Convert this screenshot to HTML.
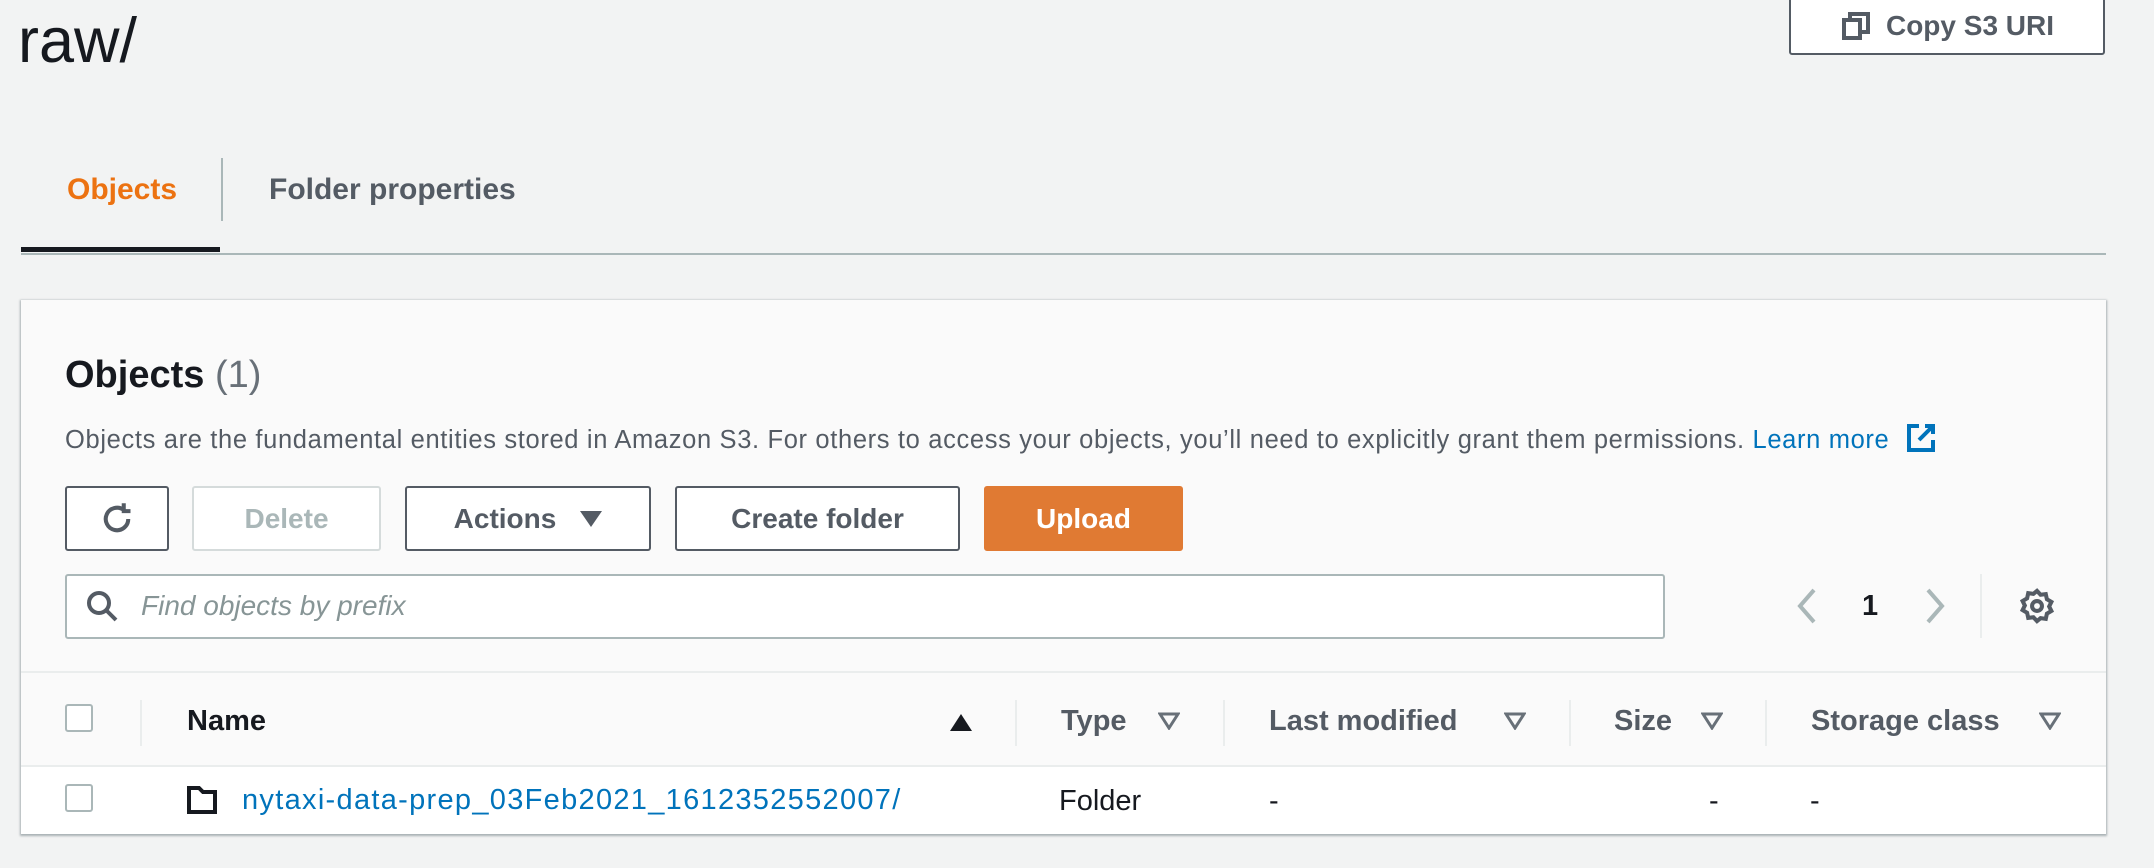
<!DOCTYPE html>
<html><head><meta charset="utf-8"><style>
*{box-sizing:border-box;margin:0;padding:0}
body{width:2154px;height:868px;background:#f2f3f3;font-family:"Liberation Sans",sans-serif;color:#16191f;position:relative;overflow:hidden}
.a{position:absolute}
.btn{position:absolute;top:486px;height:65px;border:2px solid #545b64;border-radius:3px;background:#fff;font-weight:bold;font-size:28px;color:#545b64;display:flex;align-items:center;justify-content:center}
.th{position:absolute;top:705px;font-weight:bold;font-size:29px;color:#545b64}
.dv{position:absolute;top:700px;width:2px;height:46px;background:#eaeded}
.fi{position:absolute;top:712px}
.cb{position:absolute;left:65px;width:28px;height:28px;border:2px solid #aab7b8;border-radius:3px;background:#fff}
</style></head><body>
<div class="a" style="left:18px;top:5px;font-size:63px;color:#16191f">raw/</div>
<div class="a" style="left:1789px;top:-4px;width:316px;height:59px;border:2px solid #545b64;border-radius:3px;background:#fff;display:flex;align-items:center;justify-content:center;font-weight:bold;font-size:28px;color:#545b64">
<svg width="32" height="32" viewBox="0 0 16 16" style="margin-right:14px" fill="none" stroke="#545b64" stroke-width="2"><rect x="2" y="5" width="8" height="9"/><path d="M5 5V2h9v9h-4"/></svg>Copy S3 URI</div>
<div class="a" style="left:67px;top:173px;font-size:30px;font-weight:bold;color:#ec7211">Objects</div>
<div class="a" style="left:221px;top:158px;width:2px;height:63px;background:#aab7b8"></div>
<div class="a" style="left:269px;top:173px;font-size:30px;font-weight:bold;color:#545b64">Folder properties</div>
<div class="a" style="left:21px;top:253px;width:2085px;height:2px;background:#aab7b8"></div>
<div class="a" style="left:21px;top:247px;width:199px;height:5px;background:#16191f"></div>

<div class="a" style="left:21px;top:300px;width:2085px;height:534px;background:#fafafa;box-shadow:0 1px 2px 1px rgba(0,28,36,.3)"></div>
<div class="a" style="left:65px;top:354px;font-size:38px;font-weight:bold">Objects <span style="font-weight:normal;color:#687078">(1)</span></div>
<div class="a" style="left:65px;top:422px;font-size:25.5px;letter-spacing:0.65px;color:#545b64;white-space:nowrap">Objects are the fundamental entities stored in Amazon S3. For others to access your objects, you’ll need to explicitly grant them permissions. <span style="color:#0073bb">Learn more</span>
<svg width="32" height="32" viewBox="0 0 16 16" style="vertical-align:-6px;margin-left:8px" fill="none" stroke="#0073bb" stroke-width="2"><path d="M7 2H2v12h12V9M10 2h4v4M14 2L7 9"/></svg></div>

<div class="btn" style="left:65px;width:104px"><svg width="36" height="36" viewBox="0 0 16 16" fill="none" stroke="#545b64" stroke-width="1.8"><path d="M13 8a5 5 0 1 1-2-4M11 1v3.5h3"/></svg></div>
<div class="btn" style="left:192px;width:189px;border-color:#d5dbdb;color:#aab7b8">Delete</div>
<div class="btn" style="left:405px;width:246px">Actions<span style="display:inline-block;margin-left:24px;width:0;height:0;border-left:11px solid transparent;border-right:11px solid transparent;border-top:16px solid #545b64"></span></div>
<div class="btn" style="left:675px;width:285px">Create folder</div>
<div class="btn" style="left:984px;width:199px;background:#e07a33;border-color:#e07a33;color:#fff">Upload</div>

<div class="a" style="left:65px;top:574px;width:1600px;height:65px;background:#fff;border:2px solid #aab7b8;border-radius:3px"></div>
<svg class="a" style="left:86px;top:590px" width="32" height="32" viewBox="0 0 16 16" fill="none" stroke="#545b64" stroke-width="2"><circle cx="6.5" cy="6.5" r="5"/><path d="M10 10l5 5"/></svg>
<div class="a" style="left:141px;top:590px;font-size:28px;font-style:italic;color:#879596">Find objects by prefix</div>
<svg class="a" style="left:1794px;top:588px" width="24" height="36" viewBox="0 0 12 18" fill="none" stroke="#aab7b8" stroke-width="2"><path d="M10 1L3 9l7 8"/></svg>
<div class="a" style="left:1862px;top:590px;font-size:29px;font-weight:bold">1</div>
<svg class="a" style="left:1924px;top:588px" width="24" height="36" viewBox="0 0 12 18" fill="none" stroke="#aab7b8" stroke-width="2"><path d="M2 1l7 8-7 8"/></svg>
<div class="a" style="left:1980px;top:574px;width:2px;height:64px;background:#eaeded"></div>
<svg class="a" style="left:2019px;top:588px" width="36" height="36" viewBox="0 0 16 16" fill="none" stroke="#545b64" stroke-width="1.8"><circle cx="8" cy="8" r="2.2"/><path d="M8 1.3l1.6 1.7 2.3-.3.5 2.3 2 1.2-1 2 1 2-2 1.2-.5 2.3-2.3-.3L8 14.7 6.4 13l-2.3.3-.5-2.3-2-1.2 1-2-1-2 2-1.2.5-2.3 2.3.3z"/></svg>

<div class="a" style="left:21px;top:671px;width:2085px;height:2px;background:#eaeded"></div>
<div class="cb" style="top:704px"></div>
<div class="dv" style="left:140px"></div>
<div class="th" style="left:187px;color:#16191f">Name</div>
<div class="a" style="left:950px;top:714px;width:0;height:0;border-left:11px solid transparent;border-right:11px solid transparent;border-bottom:17px solid #16191f"></div>
<div class="dv" style="left:1015px"></div>
<div class="th" style="left:1061px">Type</div>
<div class="dv" style="left:1223px"></div>
<div class="th" style="left:1269px">Last modified</div>
<div class="dv" style="left:1569px"></div>
<div class="th" style="left:1614px">Size</div>
<div class="dv" style="left:1765px"></div>
<div class="th" style="left:1811px">Storage class</div>
<svg class="fi" style="left:1158px" width="22" height="18" viewBox="0 0 11 9" fill="none" stroke="#687078" stroke-width="1.5"><path d="M1 1h9L5.5 8z"/></svg>
<svg class="fi" style="left:1504px" width="22" height="18" viewBox="0 0 11 9" fill="none" stroke="#687078" stroke-width="1.5"><path d="M1 1h9L5.5 8z"/></svg>
<svg class="fi" style="left:1701px" width="22" height="18" viewBox="0 0 11 9" fill="none" stroke="#687078" stroke-width="1.5"><path d="M1 1h9L5.5 8z"/></svg>
<svg class="fi" style="left:2039px" width="22" height="18" viewBox="0 0 11 9" fill="none" stroke="#687078" stroke-width="1.5"><path d="M1 1h9L5.5 8z"/></svg>
<div class="a" style="left:21px;top:765px;width:2085px;height:2px;background:#eaeded"></div>
<div class="a" style="left:21px;top:767px;width:2085px;height:67px;background:#fff"></div>
<div class="cb" style="top:784px"></div>
<svg class="a" style="left:187px;top:786px" width="30" height="28" viewBox="0 0 15 14" fill="none" stroke="#16191f" stroke-width="2"><path d="M1 1h5l2 2h6v10H1z"/></svg>
<div class="a" style="left:242px;top:784px;font-size:29px;letter-spacing:1.3px;color:#0073bb">nytaxi-data-prep_03Feb2021_1612352552007/</div>
<div class="a" style="left:1059px;top:785px;font-size:29px">Folder</div>
<div class="a" style="left:1269px;top:785px;font-size:29px">-</div>
<div class="a" style="left:1709px;top:785px;font-size:29px">-</div>
<div class="a" style="left:1810px;top:785px;font-size:29px">-</div>
</body></html>
